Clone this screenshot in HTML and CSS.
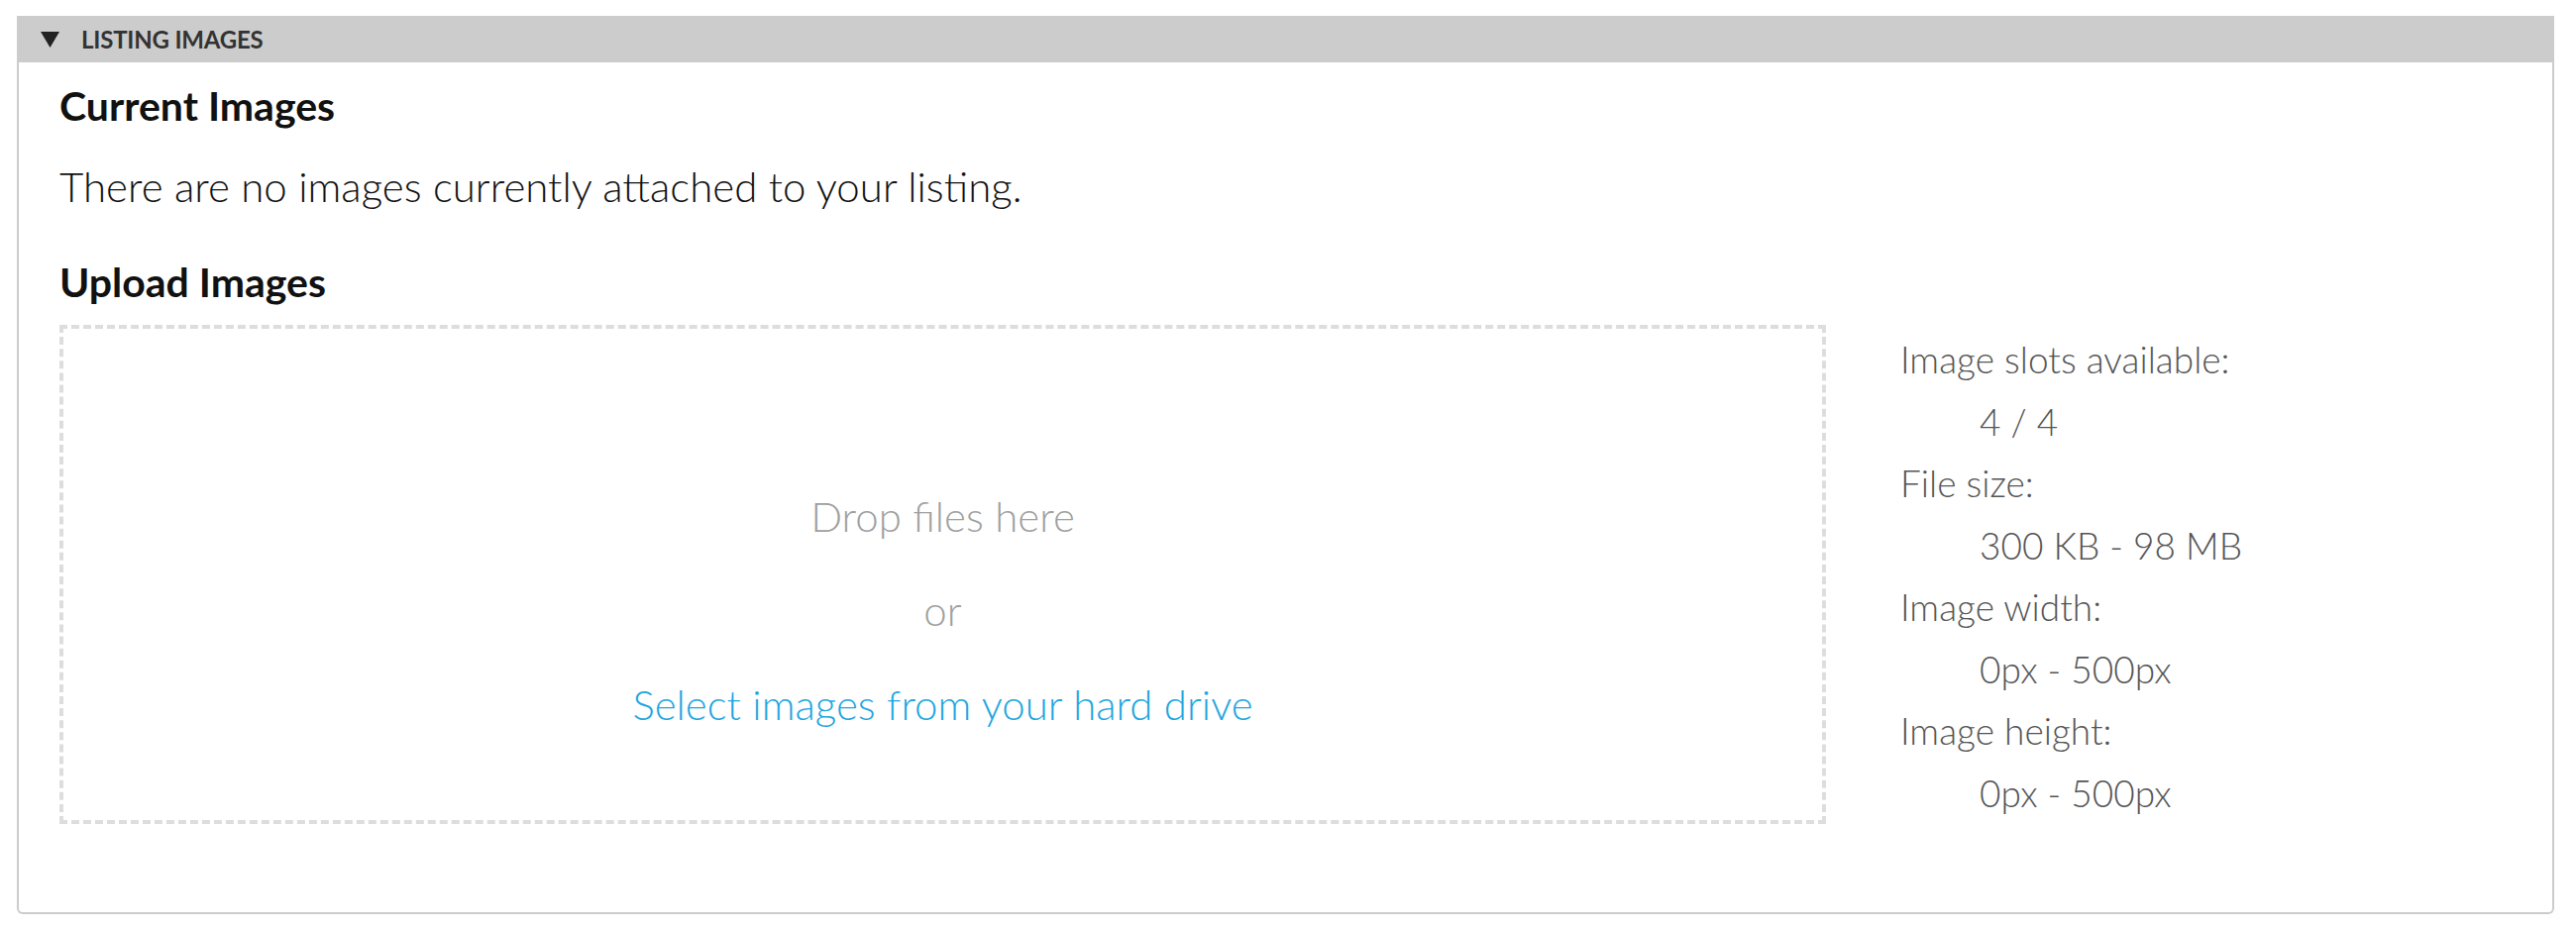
FILE: index.html
```html
<!DOCTYPE html>
<html>
<head>
<meta charset="utf-8">
<link rel="stylesheet" href="styles.css">
</head>
<body>
<section class="panel">
  <div class="panel-head">
    <svg class="caret" width="19" height="16" viewBox="0 0 19 16"><polygon points="0,0 19,0 9.5,16" fill="#222"/></svg>
    <span class="panel-title">LISTING IMAGES</span>
  </div>
  <div class="panel-body">
    <h2 class="section-title">Current Images</h2>
    <p class="note">There are no images currently attached to your listing.</p>
    <h2 class="section-title upload-title">Upload Images</h2>
    <div class="upload">
      <div class="dropzone">
        <div class="drop-text">Drop files here</div>
        <div class="drop-or">or</div>
        <a class="drop-link" href="#">Select images from your hard drive</a>
      </div>
      <dl class="limits">
        <dt>Image slots available:</dt>
        <dd>4 / 4</dd>
        <dt>File size:</dt>
        <dd>300 KB - 98 MB</dd>
        <dt>Image width:</dt>
        <dd>0px - 500px</dd>
        <dt>Image height:</dt>
        <dd>0px - 500px</dd>
      </dl>
    </div>
  </div>
</section>
</body>
</html>
```

FILE: styles.css
```css
html, body {
  margin: 0;
  padding: 0;
  background: #fff;
}
body {
  padding: 16px 22px 15px 17px;
  font-family: Lato, "Open Sans", sans-serif;
}
.panel {
  border: 2px solid #cccccc;
  border-top: 0;
  border-radius: 0 0 6px 6px;
  height: 907px;
  box-sizing: border-box;
}
.panel-head {
  background: #cccccc;
  height: 47px;
  margin: 0 -2px;
  display: flex;
  align-items: center;
  padding-left: 24px;
  box-sizing: border-box;
}
.caret {
  display: block;
  margin-right: 22px;
}
.panel-title {
  font-weight: 700;
  font-size: 24px;
  color: #333;
  letter-spacing: -0.2px;
}
.panel-body {
  padding: 20px 40px 0 41px;
}
.section-title {
  font-weight: 700;
  font-size: 41px;
  color: #111;
  margin: 0;
  line-height: 48px;
}
.note {
  font-weight: 300;
  font-size: 42px;
  color: #111;
  margin: 33px 0 0;
  line-height: 48px;
}
.upload-title {
  margin-top: 49px;
}
.upload {
  display: flex;
  margin-top: 19px;
  align-items: flex-start;
}
.dropzone {
  width: 1783px;
  height: 504px;
  box-sizing: border-box;
  border: 4px dashed #dddddd;
  display: flex;
  flex-direction: column;
  align-items: center;
  justify-content: flex-start;
  padding-top: 165px;
  font-weight: 300;
  font-size: 42px;
  line-height: 48px;
}
.drop-text, .drop-or {
  color: #a0a0a0;
}
.drop-or {
  margin-top: 47px;
}
.drop-link {
  margin-top: 47px;
  color: #1ea6df;
  text-decoration: none;
}
.limits {
  margin: 4px 0 0 75px;
  font-weight: 300;
  font-size: 37px;
  color: #555;
  line-height: 62.5px;
}
.limits dt {
  margin: 0;
}
.limits dd {
  margin: 0 0 0 80px;
}
```
